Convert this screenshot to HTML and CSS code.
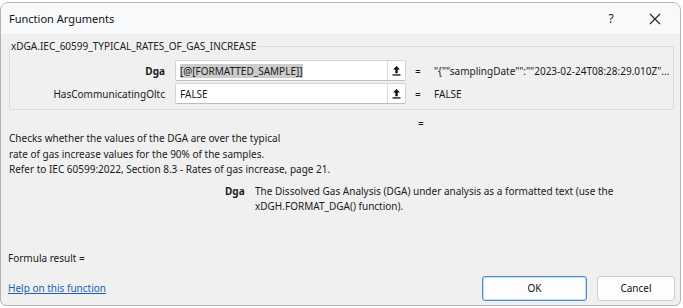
FILE: index.html
```html
<!DOCTYPE html>
<html>
<head>
<meta charset="utf-8">
<link rel="stylesheet" href="styles.css">
</head>
<body>
<div class="window">
  <div class="titlebar">
    <span class="title">Function Arguments</span>
    <span class="tb-btn help">?</span>
    <span class="tb-btn close">
      <svg width="12" height="12" viewBox="0 0 12 12"><path d="M1 1L11 11M11 1L1 11" stroke="#222" stroke-width="1.1" fill="none"/></svg>
    </span>
  </div>
  <div class="body">
    <fieldset class="group">
      <legend>xDGA.IEC_60599_TYPICAL_RATES_OF_GAS_INCREASE</legend>
      <div class="arg-row">
        <label class="arg-label bold">Dga</label>
        <div class="arg-input">
          <span class="field"><span class="sel">[@[FORMATTED_SAMPLE]]</span></span>
          <span class="ref-btn"><svg width="9" height="11" viewBox="0 0 9 11"><path d="M4.5 1L1 4.5H3.3V8.3H5.7V4.5H8Z" fill="#111"/><rect x="0.5" y="9.3" width="8" height="1.3" fill="#111"/></svg></span>
        </div>
        <span class="eq">=</span>
        <span class="val">"{""samplingDate"":""2023-02-24T08:28:29.010Z"...</span>
      </div>
      <div class="arg-row">
        <label class="arg-label">HasCommunicatingOltc</label>
        <div class="arg-input">
          <span class="field">FALSE</span>
          <span class="ref-btn"><svg width="9" height="11" viewBox="0 0 9 11"><path d="M4.5 1L1 4.5H3.3V8.3H5.7V4.5H8Z" fill="#111"/><rect x="0.5" y="9.3" width="8" height="1.3" fill="#111"/></svg></span>
        </div>
        <span class="eq">=</span>
        <span class="val">FALSE</span>
      </div>
    </fieldset>
    <div class="result-eq">=</div>
    <p class="desc">Checks whether the values of the DGA are over the typical<br>rate of gas increase values for the 90% of the samples.<br>Refer to IEC 60599:2022, Section 8.3 - Rates of gas increase, page 21.</p>
    <div class="arg-help">
      <span class="ah-name">Dga</span>
      <span class="ah-text">The Dissolved Gas Analysis (DGA) under analysis as a formatted text (use the xDGH.FORMAT_DGA() function).</span>
    </div>
    <div class="formula">Formula result =</div>
    <div class="footer">
      <a class="help-link" href="#">Help on this function</a>
      <div class="buttons">
        <button class="btn primary">OK</button>
        <button class="btn">Cancel</button>
      </div>
    </div>
  </div>
</div>
</body>
</html>
```
FILE: styles.css
```css
html, body {
  margin: 0;
  padding: 0;
  background: #ffffff;
}
body {
  width: 683px;
  height: 308px;
  overflow: hidden;
  font-family: "Noto Sans", "Open Sans", sans-serif;
  font-size: 10px;
  color: #1a1a1a;
}
.window {
  margin-top: 2px;
  width: 681px;
  height: 304px;
  box-sizing: border-box;
  border: 1px solid #b4b4b4;
  border-radius: 8px 8px 6px 6px;
  background: #f0f0f0;
  overflow: hidden;
  display: flex;
  flex-direction: column;
}
.titlebar {
  height: 31px;
  flex: none;
  background: #f8f9fb;
  display: flex;
  align-items: center;
  padding-left: 8px;
}
.title {
  font-size: 11px;
  flex: 1;
  color: #111;
}
.tb-btn {
  width: 42px;
  display: flex;
  justify-content: center;
  align-items: center;
  font-size: 12px;
  color: #222;
}
.help { margin-right: 2px; }
.close { margin-right: 4px; }
.body {
  flex: 1;
  display: flex;
  flex-direction: column;
  padding: 0 0 0 7px;
}
.group {
  margin: 6px 6px 0 1px;
  padding: 8px 0 4px 0;
  border: 1px solid #dcdcdc;
  border-radius: 2px;
  height: 70px;
  box-sizing: border-box;
}
.group legend {
  padding: 0 1px;
  margin-left: 0;
  font-size: 10px;
  color: #222;
  line-height: 12px;
}
.arg-row {
  display: flex;
  align-items: center;
  height: 21px;
  margin-bottom: 2px;
}
.arg-label {
  width: 165px;
  text-align: right;
  padding-right: 10px;
  box-sizing: border-box;
  font-size: 10px;
}
.bold { font-weight: bold; }
.arg-input {
  width: 231px;
  height: 21px;
  box-sizing: border-box;
  border: 1px solid #d4d4d4;
  border-bottom-color: #bdbdbd;
  background: #fff;
  border-radius: 2px;
  display: flex;
  align-items: center;
}
.field {
  flex: 1;
  padding-left: 4px;
  font-size: 10px;
  white-space: nowrap;
}
.sel {
  background: #cccccc;
}
.ref-btn {
  width: 18px;
  height: 19px;
  box-sizing: border-box;
  border-left: 1px solid #dcdcdc;
  display: flex;
  justify-content: center;
  align-items: center;
}
.eq {
  width: 14px;
  margin-left: 9px;
  font-size: 10px;
}
.val {
  margin-left: 5px;
  white-space: nowrap;
  font-size: 10px;
}
.result-eq {
  margin-left: 410px;
  height: 16px;
  line-height: 16px;
  margin-top: 5px;
}
.desc {
  margin: 0 0 0 1px;
  line-height: 15.5px;
  font-size: 10px;
}
.arg-help {
  display: flex;
  margin-top: 6px;
  margin-left: 217px;
  line-height: 15px;
  width: 420px;
}
.ah-name {
  font-weight: bold;
  width: 30px;
  flex: none;
}
.ah-text {
  flex: 1;
}
.formula {
  margin-top: 37px;
  line-height: 14px;
}
.footer {
  display: flex;
  align-items: center;
  justify-content: space-between;
  margin-top: 11px;
  padding-right: 5px;
}
.help-link {
  color: #1a5fb4;
  text-decoration: underline;
}
.buttons {
  display: flex;
  gap: 10px;
}
.btn {
  font-family: "Noto Sans", "Open Sans", sans-serif;
  font-size: 10px;
  color: #111;
  height: 25px;
  background: #fdfdfd;
  border: 1px solid #d0d0d0;
  border-radius: 3px;
  width: 78px;
}
.btn.primary {
  width: 105px;
  border: 1px solid #4d8fd6;
  box-shadow: inset 0 0 0 0.5px #8fb8e6;
}
```
